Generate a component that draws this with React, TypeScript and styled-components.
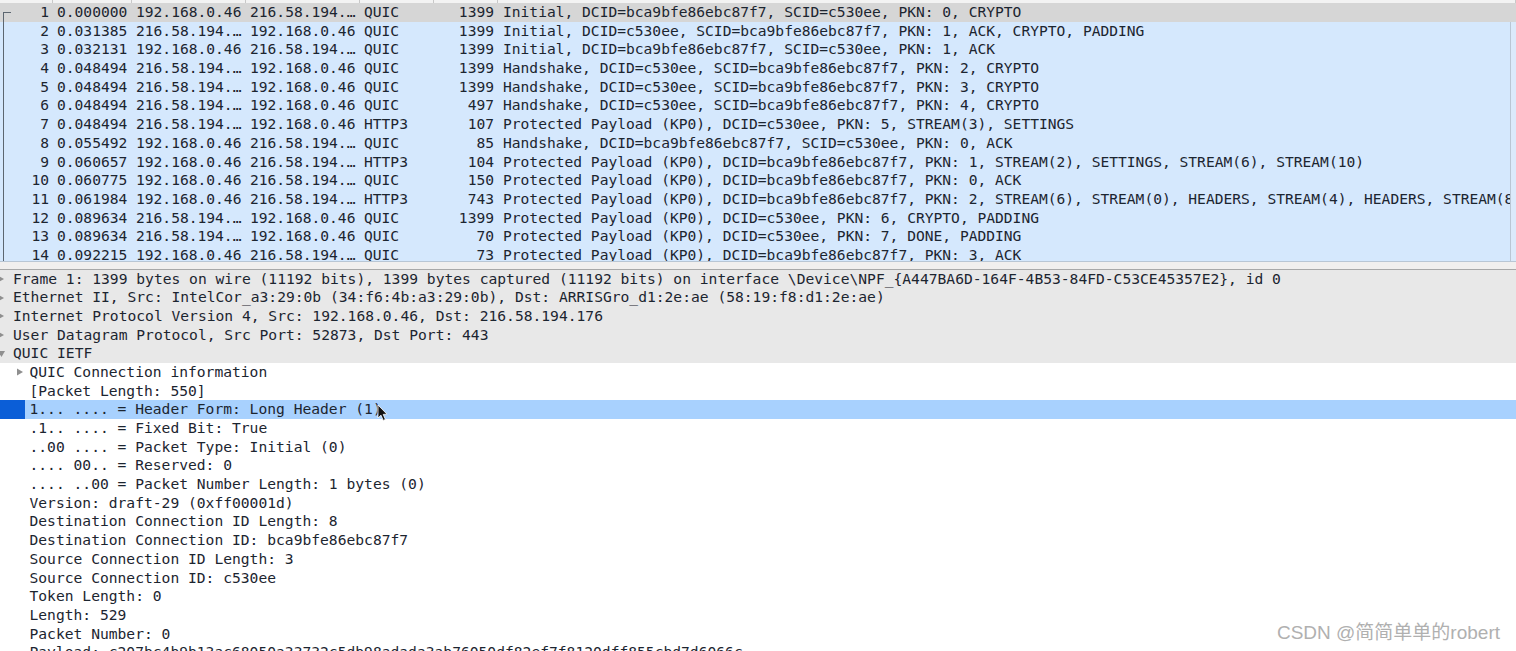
import type React from "react"
import styled, { createGlobalStyle } from "styled-components"

type Packet = [number, string, string, string, string, number, string]

const A = "192.168.0.46"
const B = "216.58.194.…"

const packets: Packet[] = [
  [1, "0.000000", A, B, "QUIC", 1399, "Initial, DCID=bca9bfe86ebc87f7, SCID=c530ee, PKN: 0, CRYPTO"],
  [2, "0.031385", B, A, "QUIC", 1399, "Initial, DCID=c530ee, SCID=bca9bfe86ebc87f7, PKN: 1, ACK, CRYPTO, PADDING"],
  [3, "0.032131", A, B, "QUIC", 1399, "Initial, DCID=bca9bfe86ebc87f7, SCID=c530ee, PKN: 1, ACK"],
  [4, "0.048494", B, A, "QUIC", 1399, "Handshake, DCID=c530ee, SCID=bca9bfe86ebc87f7, PKN: 2, CRYPTO"],
  [5, "0.048494", B, A, "QUIC", 1399, "Handshake, DCID=c530ee, SCID=bca9bfe86ebc87f7, PKN: 3, CRYPTO"],
  [6, "0.048494", B, A, "QUIC", 497, "Handshake, DCID=c530ee, SCID=bca9bfe86ebc87f7, PKN: 4, CRYPTO"],
  [7, "0.048494", B, A, "HTTP3", 107, "Protected Payload (KP0), DCID=c530ee, PKN: 5, STREAM(3), SETTINGS"],
  [8, "0.055492", A, B, "QUIC", 85, "Handshake, DCID=bca9bfe86ebc87f7, SCID=c530ee, PKN: 0, ACK"],
  [9, "0.060657", A, B, "HTTP3", 104, "Protected Payload (KP0), DCID=bca9bfe86ebc87f7, PKN: 1, STREAM(2), SETTINGS, STREAM(6), STREAM(10)"],
  [10, "0.060775", A, B, "QUIC", 150, "Protected Payload (KP0), DCID=bca9bfe86ebc87f7, PKN: 0, ACK"],
  [11, "0.061984", A, B, "HTTP3", 743, "Protected Payload (KP0), DCID=bca9bfe86ebc87f7, PKN: 2, STREAM(6), STREAM(0), HEADERS, STREAM(4), HEADERS, STREAM(8), HEADERS"],
  [12, "0.089634", B, A, "QUIC", 1399, "Protected Payload (KP0), DCID=c530ee, PKN: 6, CRYPTO, PADDING"],
  [13, "0.089634", B, A, "QUIC", 70, "Protected Payload (KP0), DCID=c530ee, PKN: 7, DONE, PADDING"],
  [14, "0.092215", A, B, "QUIC", 73, "Protected Payload (KP0), DCID=bca9bfe86ebc87f7, PKN: 3, ACK"],
]

type Detail = { text: string; toggle?: "closed" | "open"; nested?: boolean; selected?: boolean }

const details: Detail[] = [
  { text: "Frame 1: 1399 bytes on wire (11192 bits), 1399 bytes captured (11192 bits) on interface \\Device\\NPF_{A447BA6D-164F-4B53-84FD-C53CE45357E2}, id 0", toggle: "closed" },
  { text: "Ethernet II, Src: IntelCor_a3:29:0b (34:f6:4b:a3:29:0b), Dst: ARRISGro_d1:2e:ae (58:19:f8:d1:2e:ae)", toggle: "closed" },
  { text: "Internet Protocol Version 4, Src: 192.168.0.46, Dst: 216.58.194.176", toggle: "closed" },
  { text: "User Datagram Protocol, Src Port: 52873, Dst Port: 443", toggle: "closed" },
  { text: "QUIC IETF", toggle: "open" },
  { text: "QUIC Connection information", toggle: "closed", nested: true },
  { text: "[Packet Length: 550]", nested: true },
  { text: "1... .... = Header Form: Long Header (1)", nested: true, selected: true },
  { text: ".1.. .... = Fixed Bit: True", nested: true },
  { text: "..00 .... = Packet Type: Initial (0)", nested: true },
  { text: ".... 00.. = Reserved: 0", nested: true },
  { text: ".... ..00 = Packet Number Length: 1 bytes (0)", nested: true },
  { text: "Version: draft-29 (0xff00001d)", nested: true },
  { text: "Destination Connection ID Length: 8", nested: true },
  { text: "Destination Connection ID: bca9bfe86ebc87f7", nested: true },
  { text: "Source Connection ID Length: 3", nested: true },
  { text: "Source Connection ID: c530ee", nested: true },
  { text: "Token Length: 0", nested: true },
  { text: "Length: 529", nested: true },
  { text: "Packet Number: 0", nested: true },
  { text: "Payload: c207bc4b9b13ac68050a33732c5db98adada3ab76050df82ef7f8120dff855cbd7d6066c", nested: true },
]

const App: React.FC = () => {
  return (
    <Page>
      <GlobalStyle />
      <PacketPane>
        <HeaderStub>
          {[0, 1, 2, 3, 4, 5, 6].map((i) => (
            <HeaderCell key={i} />
          ))}
        </HeaderStub>
        <PacketRows>
          {packets.map(([no, time, src, dst, proto, len, info]) => (
            <PacketRow key={no} $current={no === 1}>
              <NumCell>{no}</NumCell>
              <Cell>{time}</Cell>
              <Cell>{src}</Cell>
              <Cell>{dst}</Cell>
              <Cell>{proto}</Cell>
              <NumCell>{len}</NumCell>
              <InfoCell>{info}</InfoCell>
            </PacketRow>
          ))}
          <RelationLine />
          <ScrollGutter />
        </PacketRows>
      </PacketPane>
      <Splitter />
      <DetailPane>
        {details.map((d) => (
          <DetailRow key={d.text} $top={!d.nested} $selected={!!d.selected}>
            <Toggle $nested={!!d.nested}>
              {d.toggle && (
                <svg width="7" height="8" viewBox="0 0 7 8">
                  <path
                    d={d.toggle === "closed" ? "M0 0.5 L6 4 L0 7.5 Z" : "M0 1 L7 1 L3.5 7 Z"}
                    fill="#8f8f8f"
                  />
                </svg>
              )}
            </Toggle>
            <DetailText>{d.text}</DetailText>
          </DetailRow>
        ))}
        <Pointer width="12" height="18" viewBox="0 0 12 18">
          <path d="M1 1 L1 14 L4 11.2 L6.2 16.4 L8.4 15.4 L6.2 10.4 L10 10.2 Z" fill="#111" stroke="#fff" strokeWidth="0.8" />
        </Pointer>
      </DetailPane>
      <Watermark>CSDN @简简单单的robert</Watermark>
    </Page>
  )
}

const GlobalStyle = createGlobalStyle`
  html, body {
    margin: 0;
    padding: 0;
    background: #fff;
  }
`

const Page = styled.div`
  position: relative;
  width: 1516px;
  height: 651px;
  overflow: hidden;
  display: flex;
  flex-direction: column;
  font-family: "DejaVu Sans Mono", "Liberation Mono", monospace;
  font-size: 14.6px;
  line-height: 18.7px;
  color: #1c2530;
`

const columns = "53px 79px 114px 114px 74px 64px 1fr"

const PacketPane = styled.div`
  height: 262px;
  flex: none;
  display: flex;
  flex-direction: column;
  overflow: hidden;
  border-bottom: 1px solid #b9c6d4;
  box-sizing: border-box;
`

const HeaderStub = styled.div`
  height: 3px;
  flex: none;
  display: grid;
  grid-template-columns: ${columns};
  background: #f3f3f3;
`

const HeaderCell = styled.div`
  border-right: 1px solid #c8c8c8;
`

const PacketRows = styled.div`
  position: relative;
  flex: 1;
  background: #d5e8fd;
  overflow: hidden;
`

const PacketRow = styled.div<{ $current: boolean }>`
  display: grid;
  grid-template-columns: ${columns};
  height: 18.7px;
  background: ${(p) => (p.$current ? "#d6d6d6" : "transparent")};
`

const Cell = styled.div`
  padding: 0 4px;
  white-space: nowrap;
  overflow: hidden;
`

const NumCell = styled(Cell)`
  text-align: right;
`

const InfoCell = styled(Cell)`
  padding: 0 0 0 5px;
  margin-right: 6px;
`

const RelationLine = styled.div`
  position: absolute;
  left: 3px;
  top: 9px;
  bottom: 0;
  width: 7px;
  border-left: 1px solid #5c6670;
  border-top: 1px solid #5c6670;
`

const ScrollGutter = styled.div`
  position: absolute;
  top: 19px;
  right: 0;
  bottom: 0;
  width: 5px;
  background: #dbeafb;
  border-left: 1px solid #b9c6d4;
`

const Splitter = styled.div`
  height: 7.5px;
  flex: none;
  box-sizing: border-box;
  background: #f1efee;
  border-bottom: 1px solid #a8a8a8;
`

const DetailPane = styled.div`
  position: relative;
  flex: 1;
  overflow: hidden;
  background: #fff;
  font-size: 14.63px;
`

const DetailRow = styled.div<{ $top: boolean; $selected: boolean }>`
  display: flex;
  align-items: center;
  height: 18.7px;
  padding-left: ${(p) => (p.$top ? "0" : "16.5px")};
  background: ${(p) =>
    p.$selected
      ? "linear-gradient(to right, #0b5ed7 25px, #a8d1fe 25px)"
      : p.$top
        ? "#e8e8e8"
        : "transparent"};
`

const Toggle = styled.span<{ $nested: boolean }>`
  flex: none;
  width: 13px;
  display: flex;
  align-items: center;
  svg {
    margin-left: ${(p) => (p.$nested ? "0" : "-2px")};
  }
`

const DetailText = styled.span`
  white-space: pre;
`

const Pointer = styled.svg`
  position: absolute;
  left: 377px;
  top: 134px;
`

const Watermark = styled.div`
  position: absolute;
  right: 16px;
  top: 622px;
  font-family: "Liberation Sans", "Noto Sans CJK SC", sans-serif;
  font-size: 19px;
  line-height: 22px;
  color: #b0b0b0;
  white-space: nowrap;
`

export default App
